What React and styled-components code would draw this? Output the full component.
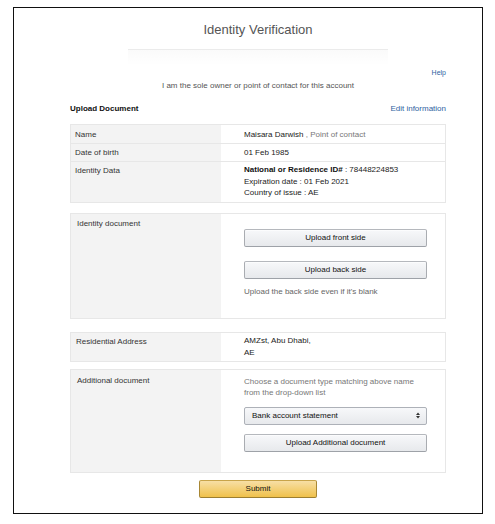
import React from 'react';
import styled, { createGlobalStyle } from 'styled-components';

const GlobalStyle = createGlobalStyle`
  html, body {
    margin: 0;
    padding: 0;
    background: #fff;
    font-family: "Liberation Sans", Arial, sans-serif;
  }
`;

const Frame = styled.div`
  box-sizing: border-box;
  margin: 7px 12px 0 13px;
  width: 470px;
  height: 507px;
  border: 1.5px solid #111;
  padding: 0 36px 0 56px;
  display: flex;
  flex-direction: column;
`;

const Title = styled.h1`
  margin: 14px 0 0;
  font-size: 13px;
  font-weight: normal;
  color: #555;
  text-align: center;
  line-height: 15px;
`;

const Divider = styled.div`
  margin: 12px auto 0;
  width: 260px;
  height: 16px;
  border-top: 1px solid #ebebeb;
  background: linear-gradient(to bottom, rgba(0, 0, 0, 0.02), rgba(0, 0, 0, 0));
`;

const HelpRow = styled.div`
  margin-top: 3px;
  display: flex;
  justify-content: flex-end;
`;

const BlueLink = styled.a`
  color: #2f5f9f;
  font-size: ${({ $small }) => ($small ? '7px' : '8px')};
  text-decoration: none;
  cursor: pointer;
`;

const Lead = styled.p`
  margin: 5px 0 0;
  text-align: center;
  font-size: 8px;
  color: #555;
`;

const SectionHead = styled.div`
  margin-top: 14px;
  display: flex;
  justify-content: space-between;
  align-items: center;
`;

const HeadTitle = styled.span`
  font-size: 8px;
  font-weight: bold;
  color: #111;
`;

const Card = styled.div`
  margin-top: ${({ $top }) => $top || 8}px;
  border: 1px solid #e7e7e7;
`;

const Row = styled.div`
  display: grid;
  grid-template-columns: 150px 1fr;
  min-height: ${({ $h }) => $h || 17}px;
  & + & {
    border-top: 1px solid #e7e7e7;
  }
`;

const Label = styled.div`
  background: #f3f3f3;
  padding: ${({ $pad }) => $pad || '4px 4px'};
  font-size: 8px;
  color: #333;
  line-height: 9px;
`;

const Value = styled.div`
  padding: ${({ $pad }) => $pad || '4px 19px 4px 23px'};
  font-size: 8px;
  color: #222;
  line-height: ${({ $lh }) => $lh || 9}px;
  display: flex;
  flex-direction: column;
`;

const Muted = styled.span`
  color: #777;
`;

const Strong = styled.b`
  font-weight: bold;
  color: #111;
`;

const GrayButton = styled.button`
  box-sizing: border-box;
  width: 183px;
  height: 18px;
  margin-top: ${({ $mt }) => $mt || 0}px;
  border: 1px solid #adb1b8;
  border-color: #b5b8bd #a9acb1 #9ea2a8;
  border-radius: 2px;
  background: linear-gradient(to bottom, #f7f8fa, #e7e9ec);
  box-shadow: inset 0 1px 0 rgba(255, 255, 255, 0.6);
  font-family: "Liberation Sans", Arial, sans-serif;
  font-size: 8px;
  color: #111;
  padding: 0;
  cursor: pointer;
`;

const Hint = styled.p`
  margin: 8px 0 0;
  font-size: 8px;
  color: #666;
`;

const SelectBox = styled.div`
  box-sizing: border-box;
  width: 183px;
  height: 18px;
  margin-top: 9px;
  border: 1px solid #adb1b8;
  border-radius: 2px;
  background: linear-gradient(to bottom, #f7f8fa, #e7e9ec);
  display: flex;
  align-items: center;
  justify-content: space-between;
  padding: 0 6px 0 7px;
  font-size: 8px;
  color: #111;
`;

const Arrows = styled.svg`
  width: 4px;
  height: 7px;
`;

const SubmitButton = styled.button`
  box-sizing: border-box;
  align-self: center;
  margin-top: 7px;
  width: 118px;
  height: 18px;
  border: 1px solid #a88734;
  border-color: #c8a44a #a88734 #9c7e31;
  border-radius: 2px;
  background: linear-gradient(to bottom, #f7dfa5, #f0c14b);
  font-family: "Liberation Sans", Arial, sans-serif;
  font-size: 8px;
  color: #111;
  padding: 0;
  cursor: pointer;
`;

export default function App() {
  return (
    <>
      <GlobalStyle />
      <Frame>
        <Title>Identity Verification</Title>
        <Divider />
        <HelpRow>
          <BlueLink $small>Help</BlueLink>
        </HelpRow>
        <Lead>I am the sole owner or point of contact for this account</Lead>
        <SectionHead>
          <HeadTitle>Upload Document</HeadTitle>
          <BlueLink>Edit information</BlueLink>
        </SectionHead>

        <Card $top={11}>
          <Row $h={18}>
            <Label $pad="5px 4px 4px">Name</Label>
            <Value $pad="5px 19px 4px 23px">
              <span>
                Maisara Darwish <Muted>, Point of contact</Muted>
              </span>
            </Value>
          </Row>
          <Row>
            <Label>Date of birth</Label>
            <Value>01 Feb 1985</Value>
          </Row>
          <Row $h={39}>
            <Label>Identity Data</Label>
            <Value $lh={11.5} $pad="2px 19px 3px 23px">
              <span>
                <Strong>National or Residence ID#</Strong> : 78448224853
              </span>
              <span>Expiration date : 01 Feb 2021</span>
              <span>Country of issue : AE</span>
            </Value>
          </Row>
        </Card>

        <Card $top={10}>
          <Row $h={104}>
            <Label $pad="5px 6px">Identity document</Label>
            <Value $pad="15px 19px 10px 23px">
              <GrayButton>Upload front side</GrayButton>
              <GrayButton $mt={14}>Upload back side</GrayButton>
              <Hint>Upload the back side even if it's blank</Hint>
            </Value>
          </Row>
        </Card>

        <Card $top={13}>
          <Row $h={27}>
            <Label $pad="4px 5px">Residential Address</Label>
            <Value $lh={12} $pad="2px 19px 2px 23px">
              <span>AMZst, Abu Dhabi,</span>
              <span>AE</span>
            </Value>
          </Row>
        </Card>

        <Card $top={7}>
          <Row $h={102}>
            <Label $pad="6px 6px">Additional document</Label>
            <Value $lh={11} $pad="6px 19px 10px 23px">
              <Muted>Choose a document type matching above name</Muted>
              <Muted>from the drop-down list</Muted>
              <SelectBox>
                <span>Bank account statement</span>
                <Arrows viewBox="0 0 4 7">
                  <path d="M0 3 L2 0.5 L4 3 Z M0 4 L2 6.5 L4 4 Z" fill="#333" />
                </Arrows>
              </SelectBox>
              <GrayButton $mt={9}>Upload Additional document</GrayButton>
            </Value>
          </Row>
        </Card>

        <SubmitButton>Submit</SubmitButton>
      </Frame>
    </>
  );
}
